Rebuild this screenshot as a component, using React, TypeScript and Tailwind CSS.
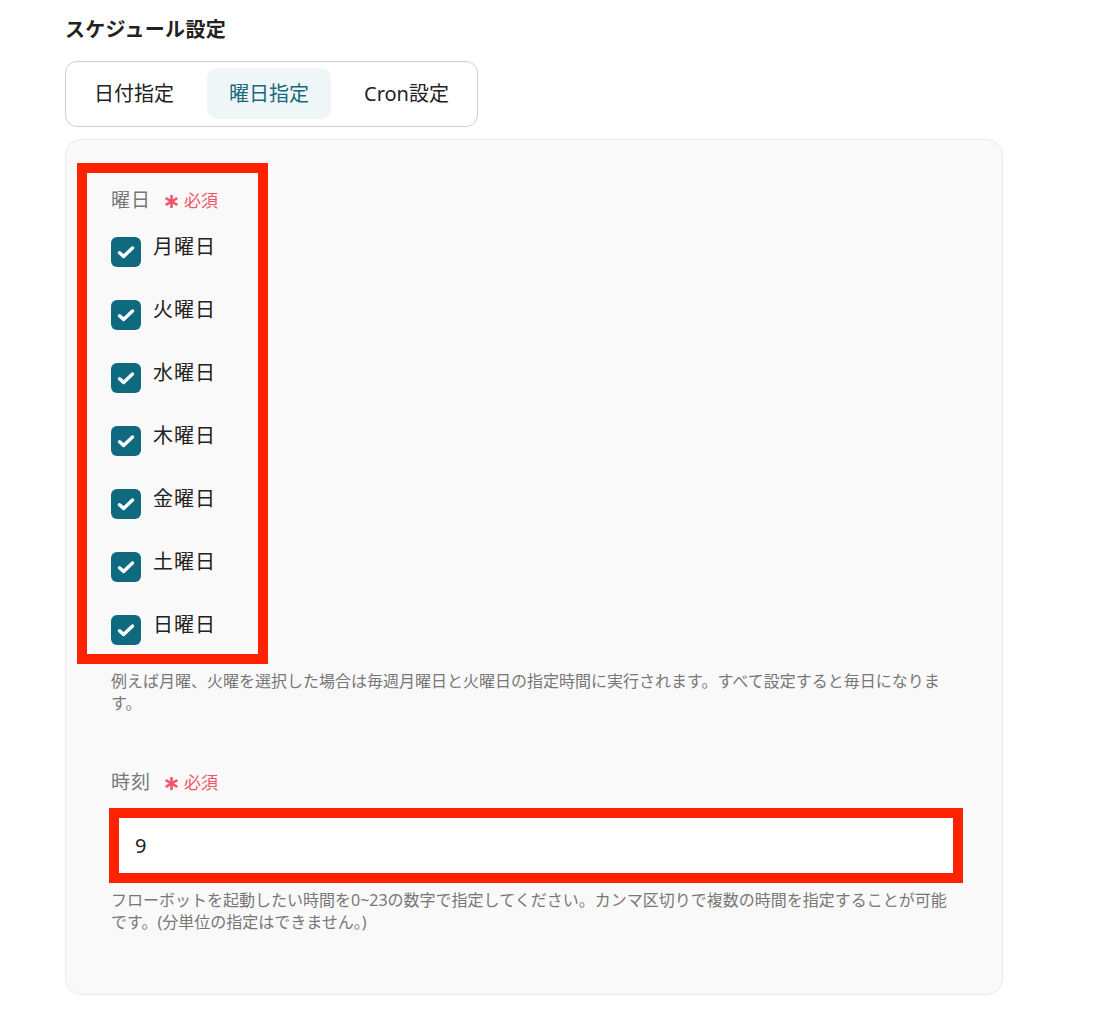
import { useState } from "react";

const days = ["月曜日", "火曜日", "水曜日", "木曜日", "金曜日", "土曜日", "日曜日"];
const tabs = ["日付指定", "曜日指定", "Cron設定"];

const font = "font-['Noto_Sans','Noto_Sans_CJK_JP',sans-serif]";

const Required = () => (
  <span className="flex items-center gap-[6px] text-[#f2556a] text-[17px]">
    <svg width="13" height="13" viewBox="0 0 12 12" className="mt-[1px]">
      <g stroke="#f2556a" strokeWidth="2.4" strokeLinecap="round">
        <line x1="6" y1="0.8" x2="6" y2="11.2" />
        <line x1="1.5" y1="3.4" x2="10.5" y2="8.6" />
        <line x1="1.5" y1="8.6" x2="10.5" y2="3.4" />
      </g>
    </svg>
    必須
  </span>
);

const CheckBox = () => (
  <span className="flex h-[30px] w-[30px] shrink-0 items-center justify-center rounded-[6px] bg-[#0f6a80]">
    <svg width="20" height="20" viewBox="0 0 20 20" fill="none">
      <path d="M3.5 10.8 L7.6 14.4 L16.5 6" stroke="white" strokeWidth="3.4" strokeLinecap="round" strokeLinejoin="round" />
    </svg>
  </span>
);

const App = () => {
  const [tab, setTab] = useState(1);

  return (
    <div className={`min-h-[1029px] w-[1116px] bg-white pl-[65px] pt-[16px] ${font}`}>
      <h2 className="text-[20px] leading-[28px] font-semibold text-[#222] tracking-[0.3px]">スケジュール設定</h2>

      <div className="mt-[17px] inline-flex gap-[11px] rounded-[12px] border border-[#cfcfcf] px-[6px] pt-[6px] pb-[7px]">
        {tabs.map((t, i) => (
          <button
            key={t}
            onClick={() => setTab(i)}
            className={
              i === tab
                ? "h-[51px] rounded-[10px] bg-[#eff6f7] px-[22px] text-[20px] text-[#17697d]"
                : "h-[51px] rounded-[10px] px-[22px] text-[20px] text-[#222]"
            }
          >
            {t}
          </button>
        ))}
      </div>

      <div className="mt-[12px] w-[938px] rounded-[16px] border border-[#ececec] bg-[#f9f9f9] px-[45px] pt-[23px] pb-[61px]">
        <div className="-ml-[34px] w-[191px] border-[10px] border-[#ff2200] pl-[24px] pt-[14px] pb-[9px]">
          <div className="flex items-center gap-[14px]">
            <span className="text-[19px] leading-[27px] tracking-[1px] text-[#777]">曜日</span>
            <Required />
          </div>
          <div className="mt-[23px] flex flex-col gap-[33px]">
            {days.map((d) => (
              <label key={d} className="flex items-start gap-[12px]">
                <CheckBox />
                <span className="text-[20px] leading-[20px] tracking-[1px] text-[#222]">{d}</span>
              </label>
            ))}
          </div>
        </div>
        <p className="mt-[6px] w-[846px] text-[16px] leading-[22px] text-[#777]">
          例えば月曜、火曜を選択した場合は毎週月曜日と火曜日の指定時間に実行されます。すべて設定すると毎日になります。
        </p>

        <div className="mt-[55px] flex items-center gap-[14px]">
          <span className="text-[19px] leading-[27px] tracking-[1px] text-[#777]">時刻</span>
          <Required />
        </div>
        <div className="mt-[12px] -ml-[2px] w-[854px] border-[10px] border-[#ff2200] bg-white">
          <input
            defaultValue="9"
            className="h-[55px] w-full bg-white px-[16px] text-[20px] text-[#222] outline-none"
          />
        </div>
        <p className="mt-[6px] w-[846px] text-[16px] leading-[22px] text-[#777]">
          フローボットを起動したい時間を0~23の数字で指定してください。カンマ区切りで複数の時間を指定することが可能です。(分単位の指定はできません。)
        </p>
      </div>
    </div>
  );
};

export default App;
